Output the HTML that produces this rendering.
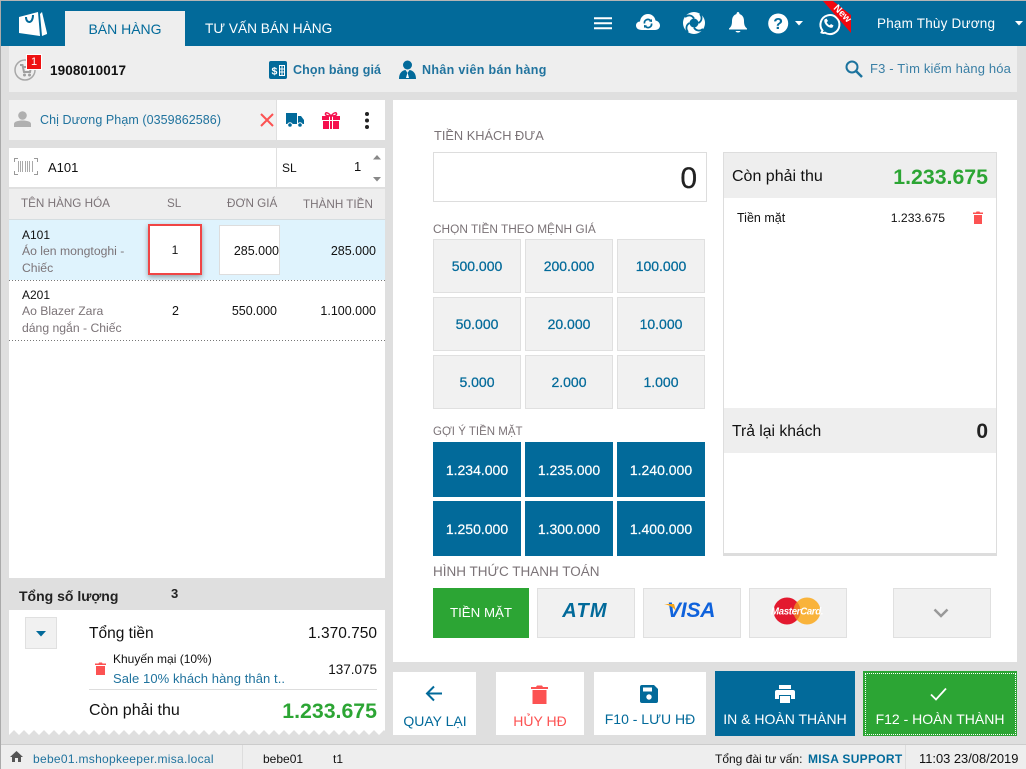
<!DOCTYPE html>
<html><head><meta charset="utf-8"><style>
html,body{margin:0;padding:0;width:1026px;height:769px;overflow:hidden;background:#dfdfdf;font-family:"Liberation Sans","DejaVu Sans",sans-serif;color:#111}
.a{position:absolute;white-space:nowrap}
.t{position:absolute;white-space:nowrap;font-size:13px;line-height:16px}
.r{text-align:right}.c{text-align:center}
.blue{color:#026a9a}
.lab{color:#7b7377;font-size:11.7px}
.d{position:absolute;width:86px;height:52px;background:#f1f1f1;border:1px solid #e0e0e0;color:#026a9a;font-size:14px;line-height:52px;text-align:center;-webkit-text-stroke:.25px #026a9a}
.g{position:absolute;width:88px;height:55px;background:#026a9a;color:#fff;font-size:14px;line-height:57px;text-align:center;-webkit-text-stroke:.2px #fff}
.p{position:absolute;top:588px;height:48px;background:#f1f1f1;border:1px solid #e0e0e0}
.b{position:absolute;background:#fff;text-align:center;font-size:14px;color:#026a9a}
.dot{position:absolute;left:9px;width:376px;height:1px;background:repeating-linear-gradient(90deg,#777 0 1px,transparent 1px 3px)}
svg{position:absolute;overflow:visible}
</style></head><body>
<div class="a" style="left:0;top:0;width:1026px;height:1px;background:#b5b5b5"></div>
<div class="a" style="left:1px;top:1px;width:1025px;height:45px;background:#026a9a"></div>
<div class="a" style="left:0;top:1px;width:1px;height:768px;background:#aaa"></div>
<!-- logo -->
<svg style="left:18px;top:11px" width="30" height="26" viewBox="0 0 30 26"><path d="M1 6 L20 1 L22 25 L1 22 Z" fill="#fff"/><path d="M24 1 L29 22 L29 23 L24 25 L22 3 Z" fill="#fff"/><path d="M8 6 C8 13 15 13 15 4" fill="none" stroke="#026a9a" stroke-width="2"/></svg>
<div class="a c" style="left:65px;top:11px;width:120px;height:35px;background:#eee;color:#026a9a;font-size:14px;line-height:36px">BÁN HÀNG</div>
<div class="t" style="left:205px;top:21px;color:#fff;font-size:13.700px">TƯ VẤN BÁN HÀNG</div>
<!-- top icons -->
<svg style="left:594px;top:17px" width="18" height="13"><path d="M0 1.200H18M0 6.200H18M0 11.200H18" stroke="#fff" stroke-width="2"/></svg>
<svg style="left:636px;top:13px" width="24" height="18" viewBox="0 0 24 18"><path d="M6 17C2 17 0 15 0 12.500C0 10 2 8.500 4 8.500C4.500 4 8 1 12 1C16 1 19 4 19.500 7.500C22 8 24 10 24 12.500C24 15 22 17 19 17Z" fill="#fff"/><path d="M8.500 10.500A3.500 3.500 0 0 1 14.500 7.500M15.500 10.500A3.500 3.500 0 0 1 9.500 13.500" fill="none" stroke="#026a9a" stroke-width="1.700"/><path d="M13 8.500L16 9V6ZM11 12.500L8 12V15Z" fill="#026a9a"/></svg>
<svg style="left:683px;top:12px" width="22" height="22" viewBox="0 0 22 22"><circle cx="11" cy="11" r="11" fill="#fff"/><circle cx="11" cy="11" r="4.500" fill="#026a9a"/><path d="M11 6.500C9 3 5 2.500 2 5M15.500 11C19 9 19.500 5 17 2M11 15.500C13 19 17 19.500 20 17M6.500 11C3 13 2.500 17 5 20" fill="none" stroke="#026a9a" stroke-width="1.800"/></svg>
<svg style="left:729px;top:12px" width="18" height="21" viewBox="0 0 18 21"><path d="M9 0C10 0 10.500 1 10.500 2C13.500 3 15 5.500 15 9C15 13 16 15 18 16.500V17.500H0V16.500C2 15 3 13 3 9C3 5.500 4.500 3 7.500 2C7.500 1 8 0 9 0Z" fill="#fff"/><path d="M6.500 19H11.500C11 21 7 21 6.500 19Z" fill="#fff"/></svg>
<svg style="left:768px;top:13px" width="21" height="21" viewBox="0 0 21 21"><circle cx="10.200" cy="10.500" r="10" fill="#fff"/><text x="10.200" y="16" font-family="Liberation Sans" font-size="16" font-weight="700" text-anchor="middle" fill="#026a9a">?</text></svg>
<svg style="left:795px;top:21px" width="8" height="5"><path d="M0 0H8L4 4.500Z" fill="#fff"/></svg>
<svg style="left:817px;top:13px" width="22" height="22" viewBox="0 0 22 22"><path d="M4.500 19.500L5.500 17.500A9.500 9.500 0 1 1 8 19.700C7 20 5.500 20 4.500 19.500Z" fill="none" stroke="#fff" stroke-width="2"/><path d="M7.500 6.500L9.500 5.500L11 8L9.700 9.200C10.300 10.700 11.300 11.700 12.800 12.300L14 11L16.500 12.500L15.500 14.500C12 16 6 10.500 7.500 6.500Z" fill="#fff"/></svg>
<svg style="left:823px;top:1px" width="29" height="33"><path d="M0 0H10L28 14V32Z" fill="#f3060f"/><text x="0" y="0" transform="translate(10 7.500) rotate(45)" font-family="Liberation Sans" font-size="10" font-weight="700" fill="#fff">New</text></svg>
<div class="t" style="left:877px;top:16px;color:#fff;font-size:13.500px;letter-spacing:.2px">Phạm Thùy Dương</div>
<svg style="left:1015px;top:21px" width="8" height="5"><path d="M0 0H8L4 4.500Z" fill="#fff"/></svg>

<!-- toolbar -->
<div class="a" style="left:9px;top:46px;width:1008px;height:46px;background:#eee"></div>
<svg style="left:14px;top:59px" width="22" height="22" viewBox="0 0 22 22"><circle cx="11" cy="11" r="10" fill="none" stroke="#a8a8a8" stroke-width="1.500"/><path d="M6 6H8.500L10 13H16L17 8H9" fill="none" stroke="#a0a0a0" stroke-width="2"/><circle cx="10.500" cy="16" r="1.500" fill="#a0a0a0"/><circle cx="15.500" cy="16" r="1.500" fill="#a0a0a0"/></svg>
<div class="a c" style="left:26px;top:54px;width:14px;height:14px;background:#ee1111;border:1px solid #fff;color:#fff;font-size:11px;line-height:14px">1</div>
<div class="t" style="left:50px;top:63px;font-size:13.500px;font-weight:700;letter-spacing:.1px">1908010017</div>
<svg style="left:269px;top:61px" width="18" height="18" viewBox="0 0 18 18"><rect width="18" height="18" rx="2" fill="#026a9a"/><path d="M10.500 4.500H15.500V14.500H10.500ZM13 4.500V14.500M10.500 8H15.500M10.500 11H15.500" stroke="#fff" stroke-width="1" fill="none"/><text x="2.500" y="13.500" font-family="Liberation Sans" font-size="10.500" font-weight="700" fill="#fff">$</text></svg>
<div class="t blue" style="left:293px;top:62px;font-weight:700;font-size:12.500px;letter-spacing:.1px;color:#20739e">Chọn bảng giá</div>
<svg style="left:399px;top:60px" width="17" height="19" viewBox="0 0 17 19"><circle cx="8.500" cy="5" r="4.500" fill="#026a9a"/><path d="M0 19C0 13 3 10.500 6.500 10L8.500 13L10.500 10C14 10.500 17 13 17 19Z" fill="#026a9a"/><path d="M8.500 12.500L10 18H7Z" fill="#fff"/></svg>
<div class="t blue" style="left:422px;top:62px;font-weight:700;font-size:12.500px;letter-spacing:.33px;color:#20739e">Nhân viên bán hàng</div>
<svg style="left:845px;top:60px" width="18" height="18" viewBox="0 0 18 18"><circle cx="7" cy="7" r="5.500" fill="none" stroke="#1c739e" stroke-width="2"/><path d="M11 11L17 17" stroke="#1c739e" stroke-width="2.500"/></svg>
<div class="t" style="left:870px;top:61px;color:#3a7fa5;font-size:13px;letter-spacing:.15px">F3 - Tìm kiếm hàng hóa</div>

<!-- customer -->
<div class="a" style="left:9px;top:100px;width:267px;height:40px;background:#f1f1f1"></div>
<div class="a" style="left:277px;top:100px;width:108px;height:40px;background:#fff"></div>
<svg style="left:14px;top:111px" width="17" height="16" viewBox="0 0 17 16"><circle cx="8.500" cy="4.500" r="4.300" fill="#b0b0b0"/><path d="M0 16V13C0 10.500 4 9.500 8.500 9.500C13 9.500 17 10.500 17 13V16Z" fill="#b0b0b0"/></svg>
<div class="t blue" style="left:40px;top:112px;font-size:12.500px;letter-spacing:.07px;color:#20739e">Chị Dương Phạm (0359862586)</div>
<svg style="left:260px;top:113px" width="14" height="14"><path d="M1 1L13 13M13 1L1 13" stroke="#fc5252" stroke-width="2"/></svg>
<svg style="left:286px;top:113px" width="18" height="15" viewBox="0 0 18 15"><path d="M0 0H11V11H0ZM12 3H15L18 7V11H12Z" fill="#026a9a"/><circle cx="4" cy="12" r="2.300" fill="#026a9a" stroke="#fff"/><circle cx="14" cy="12" r="2.300" fill="#026a9a" stroke="#fff"/></svg>
<svg style="left:322px;top:112px" width="18" height="17" viewBox="0 0 18 17"><path d="M0 4H18V8H0ZM1 9H17V17H1Z" fill="#f5104e"/><path d="M7.500 4V17M10.500 4V17" stroke="#fff" stroke-width="1"/><path d="M9 4C6 0 3 0 3.500 2.500C4 4 7 4 9 4C11 4 14 4 14.500 2.500C15 0 12 0 9 4Z" fill="none" stroke="#f5104e" stroke-width="1.500"/></svg>
<svg style="left:365px;top:112px" width="4" height="17"><circle cx="2" cy="2" r="2" fill="#222"/><circle cx="2" cy="8.500" r="2" fill="#222"/><circle cx="2" cy="15" r="2" fill="#222"/></svg>

<!-- scan row -->
<div class="a" style="left:9px;top:148px;width:376px;height:39px;background:#fff"></div>
<div class="a" style="left:276px;top:148px;width:1px;height:39px;background:#e0e0e0"></div>
<svg style="left:14px;top:158px" width="24" height="17" viewBox="0 0 24 17"><path d="M4 .5H.5V4M.5 13V16.500H4M20 .5H23.500V4M23.500 13V16.500H20" fill="none" stroke="#999"/><path d="M4.500 3V14M6.500 3V14M8.500 3V14M11.500 3V14M13.500 3V14M15.500 3V14M18.500 3V14" stroke="#aaa" stroke-width="1"/></svg>
<div class="t" style="left:48px;top:160px;font-size:13px">A101</div>
<div class="t" style="left:282px;top:160px;font-size:12px">SL</div>
<div class="t" style="left:354px;top:159px;font-size:13px">1</div>
<svg style="left:373px;top:155px" width="8" height="27"><path d="M4 0L8 4.500H0ZM0 22H8L4 26.500Z" fill="#888"/></svg>

<!-- table -->
<div class="a" style="left:9px;top:188px;width:376px;height:31px;background:#eee;border-top:1px solid #e0e0e0;box-sizing:border-box"></div>
<div class="a" style="left:9px;top:219px;width:376px;height:1px;background:#d5dde0"></div>
<div class="t lab" style="left:21px;top:196px">TÊN HÀNG HÓA</div>
<div class="t lab" style="left:167px;top:196px">SL</div>
<div class="t lab" style="left:227px;top:196px">ĐƠN GIÁ</div>
<div class="t lab" style="left:303px;top:197px">THÀNH TIỀN</div>
<div class="a" style="left:9px;top:220px;width:376px;height:60px;background:#dff3fd"></div>
<div class="a" style="left:9px;top:280px;width:376px;height:298px;background:#fff"></div>
<div class="dot" style="top:280px"></div>
<div class="dot" style="top:340px"></div>
<div class="t" style="left:22px;top:227px;font-size:12px">A101</div>
<div class="t" style="left:22px;top:243px;font-size:12.200px;color:#7b7377">Áo len mongtoghi -</div>
<div class="t" style="left:22px;top:260px;font-size:12.200px;color:#7b7377">Chiếc</div>
<div class="a c" style="left:148px;top:224px;width:50px;height:47px;background:#fff;border:2px solid #f04545;box-shadow:0 2px 5px rgba(0,0,0,.35);font-size:12px;line-height:49px">1</div>
<div class="a" style="left:219px;top:225px;width:59px;height:48px;background:#fff;border:1px solid #ddd;font-size:12.500px;line-height:50px;text-align:right;overflow:hidden">285.000</div>
<div class="t r" style="left:300px;width:76px;top:243px;font-size:12.500px">285.000</div>
<div class="t" style="left:22px;top:287px;font-size:12px">A201</div>
<div class="t" style="left:22px;top:303px;font-size:12.200px;color:#7b7377">Ao Blazer Zara</div>
<div class="t" style="left:22px;top:320px;font-size:12.200px;color:#7b7377">dáng ngắn - Chiếc</div>
<div class="t" style="left:172px;top:303px;font-size:12.500px">2</div>
<div class="t r" style="left:207px;width:70px;top:303px;font-size:12.500px">550.000</div>
<div class="t r" style="left:296px;width:80px;top:303px;font-size:12.500px">1.100.000</div>

<!-- totals -->
<div class="t" style="left:19px;top:588px;font-weight:700;font-size:14px;color:#222">Tổng số lượng</div>
<div class="t" style="left:171px;top:586px;font-weight:700;font-size:13px;color:#222">3</div>
<svg style="left:9px;top:610px" width="376" height="125" viewBox="0 0 376 125"><defs><pattern id="z" width="10" height="5" patternUnits="userSpaceOnUse" y="120"><path d="M0 5L5 0L10 5Z" fill="#dfdfdf"/><path d="M0 0H5L0 5ZM5 0H10V5Z" fill="#fff"/></pattern></defs><rect width="376" height="120" fill="#fff"/><rect y="120" width="376" height="5" fill="url(#z)"/></svg>
<div class="a" style="left:25px;top:617px;width:30px;height:30px;background:#f1f1f1;border:1px solid #e0e0e0"></div>
<svg style="left:36px;top:631px" width="10" height="6"><path d="M0 0H10L5 5.500Z" fill="#026a9a"/></svg>
<div class="t" style="left:89px;top:626px;font-size:15.500px">Tổng tiền</div>
<div class="t r" style="left:277px;width:100px;top:626px;font-size:15.500px">1.370.750</div>
<svg style="left:95px;top:662px" width="11" height="13" viewBox="0 0 11 13"><path d="M0 1.500H3.500L4 .5H7L7.500 1.500H11V3H0ZM1 4H10V13H1Z" fill="#fc5252"/></svg>
<div class="t" style="left:113px;top:651px;font-size:12px">Khuyến mại (10%)</div>
<div class="t" style="left:113px;top:671px;font-size:13px;color:#20739e;letter-spacing:.08px">Sale 10% khách hàng thân t..</div>
<div class="t r" style="left:297px;width:80px;top:662px;font-size:13.500px">137.075</div>
<div class="a" style="left:89px;top:689px;width:288px;height:1px;background:#ddd"></div>
<div class="t" style="left:89px;top:703px;font-size:16px">Còn phải thu</div>
<div class="t r" style="left:257px;width:120px;top:700px;font-size:21.300px;line-height:22px;font-weight:700;color:#2ca534">1.233.675</div>

<!-- right panel -->
<div class="a" style="left:393px;top:100px;width:624px;height:562px;background:#fff"></div>
<div class="t lab" style="left:434px;top:128px;font-size:12.800px">TIỀN KHÁCH ĐƯA</div>
<div class="a r" style="left:433px;top:152px;width:263px;height:48px;background:#fff;border:1px solid #ddd;padding-right:9px;font-size:30px;line-height:52px;color:#222;-webkit-text-stroke:.3px #222">0</div>
<div class="t lab" style="left:433px;top:221px;font-size:11.850px">CHỌN TIỀN THEO MỆNH GIÁ</div>
<div class="d" style="left:433px;top:239px">500.000</div><div class="d" style="left:525px;top:239px">200.000</div><div class="d" style="left:617px;top:239px">100.000</div>
<div class="d" style="left:433px;top:297px">50.000</div><div class="d" style="left:525px;top:297px">20.000</div><div class="d" style="left:617px;top:297px">10.000</div>
<div class="d" style="left:433px;top:355px">5.000</div><div class="d" style="left:525px;top:355px">2.000</div><div class="d" style="left:617px;top:355px">1.000</div>
<div class="t lab" style="left:433px;top:424px;font-size:11.500px">GỢI Ý TIỀN MẶT</div>
<div class="g" style="left:433px;top:442px">1.234.000</div><div class="g" style="left:525px;top:442px">1.235.000</div><div class="g" style="left:617px;top:442px">1.240.000</div>
<div class="g" style="left:433px;top:501px">1.250.000</div><div class="g" style="left:525px;top:501px">1.300.000</div><div class="g" style="left:617px;top:501px">1.400.000</div>
<!-- right box -->
<div class="a" style="left:723px;top:152px;width:272px;height:400px;border:1px solid #ddd;border-bottom:3px solid #ddd;background:#fff"></div>
<div class="a" style="left:724px;top:153px;width:272px;height:45px;background:#eee"></div>
<div class="t" style="left:732px;top:169px;font-size:16px">Còn phải thu</div>
<div class="t r" style="left:868px;width:120px;top:166px;font-size:21.300px;line-height:22px;font-weight:700;color:#2ca534">1.233.675</div>
<div class="t" style="left:737px;top:210px;font-size:12.500px">Tiền mặt</div>
<div class="t r" style="left:865px;width:80px;top:210px;font-size:12.200px">1.233.675</div>
<svg style="left:973px;top:211px" width="10" height="13" viewBox="0 0 10 13"><path d="M0 1.500H3L3.500 .5H6.500L7 1.500H10V3H0ZM1 4H9V13H1Z" fill="#fc5252"/></svg>
<div class="a" style="left:724px;top:408px;width:272px;height:45px;background:#eee"></div>
<div class="t" style="left:732px;top:424px;font-size:15.700px">Trả lại khách</div>
<div class="t r" style="left:938px;width:50px;top:421px;font-size:21px;line-height:22px;font-weight:700;color:#222">0</div>
<!-- payment -->
<div class="t lab" style="left:433px;top:564px;font-size:13.500px">HÌNH THỨC THANH TOÁN</div>
<div class="a c" style="left:433px;top:588px;width:96px;height:50px;background:#2ca534;color:#fff;font-size:13.300px;line-height:50px">TIỀN MẶT</div>
<div class="p" style="left:537px;width:96px"></div>
<div class="a c" style="left:536px;top:600px;width:98px;font-size:20px;line-height:22px;font-style:italic;font-weight:700;color:#026a9a;letter-spacing:1.200px">ATM</div>
<div class="p" style="left:643px;width:96px"></div>
<div class="a" style="left:667px;top:600px;width:52px;font-size:21px;line-height:22px;font-style:italic;font-weight:700;color:#0f62dc;letter-spacing:-.2px">VISA</div>
<svg style="left:664px;top:604px" width="12" height="7"><path d="M0 0H10L12 7C9 3 5 1 0 0Z" fill="#f4a51c"/></svg>
<div class="p" style="left:749px;width:96px"></div>
<svg style="left:773px;top:597px" width="48" height="28" viewBox="0 0 48 28"><circle cx="14" cy="14" r="13.500" fill="#e3192f"/><circle cx="34" cy="14" r="13.500" fill="#f9b33b"/><path d="M24 5A13.500 13.500 0 0 1 24 23A13.500 13.500 0 0 1 24 5Z" fill="#ee7a24"/><text x="24" y="17.500" text-anchor="middle" font-family="Liberation Sans" font-size="9.800" font-weight="700" font-style="italic" fill="#fff" letter-spacing="-.4">MasterCard.</text></svg>
<div class="p" style="left:893px;width:96px"></div>
<svg style="left:933px;top:608px" width="16" height="10"><path d="M1.500 1.500L8 8L14.500 1.500" fill="none" stroke="#999" stroke-width="2.500"/></svg>

<!-- buttons -->
<div class="b" style="left:393px;top:672px;width:83px;height:63px"></div>
<svg style="left:425px;top:685px" width="18" height="17"><path d="M9 1.500L2 8.500L9 15.500M2 8.500H17" fill="none" stroke="#026a9a" stroke-width="2"/></svg>
<div class="t c" style="left:390px;top:713px;width:90px;font-size:14px;color:#026a9a">QUAY LẠI</div>
<div class="b" style="left:496px;top:672px;width:88px;height:63px"></div>
<svg style="left:531px;top:685px" width="17" height="19" viewBox="0 0 17 19"><path d="M0 2H5L6 .5H11L12 2H17V4H0ZM1.500 5H15.500V19H1.500Z" fill="#fc5252"/></svg>
<div class="t c" style="left:496px;top:713px;width:88px;font-size:14px;color:#fc5252">HỦY HĐ</div>
<div class="b" style="left:594px;top:672px;width:112px;height:63px"></div>
<svg style="left:640px;top:685px" width="18" height="18" viewBox="0 0 18 18"><path d="M2 0H14L18 4V16A2 2 0 0 1 16 18H2A2 2 0 0 1 0 16V2A2 2 0 0 1 2 0Z" fill="#026a9a"/><rect x="3" y="2.500" width="9" height="4" fill="#fff"/><circle cx="9" cy="12" r="2.700" fill="#fff"/></svg>
<div class="t c" style="left:594px;top:711px;width:112px;font-size:14px;color:#026a9a">F10 - LƯU HĐ</div>
<div class="b" style="left:715px;top:671px;width:140px;height:65px;background:#026a9a"></div>
<svg style="left:775px;top:685px" width="20" height="18" viewBox="0 0 20 18"><path d="M4 0H16V4H4ZM2 5H18A2 2 0 0 1 20 7V14H16V10H4V14H0V7A2 2 0 0 1 2 5ZM5 11H15V18H5Z" fill="#fff"/></svg>
<div class="t c" style="left:715px;top:711px;width:140px;font-size:14px;color:#fff">IN &amp; HOÀN THÀNH</div>
<div class="b" style="left:863px;top:671px;width:154px;height:65px;background:#2ca534"></div>
<div class="a" style="left:865px;top:673px;width:149px;height:60px;border:1px dotted #fff"></div>
<svg style="left:930px;top:687px" width="17" height="14"><path d="M1 7.500L6 12.500L16 1.500" fill="none" stroke="#fff" stroke-width="1.800"/></svg>
<div class="t c" style="left:863px;top:711px;width:154px;font-size:14px;color:#fff">F12 - HOÀN THÀNH</div>

<!-- status -->
<div class="a" style="left:1px;top:744px;width:1025px;height:25px;background:#eee;border-top:1px solid #ccc;box-sizing:border-box"></div>
<div class="a" style="left:242px;top:745px;width:1px;height:24px;background:#ddd"></div>
<div class="a" style="left:905px;top:745px;width:1px;height:24px;background:#ddd"></div>
<svg style="left:10px;top:751px" width="13" height="11"><path d="M6.500 0L13 6H11V11H8V7H5V11H2V6H0Z" fill="#555"/></svg>
<div class="t" style="left:33px;top:751px;font-size:12px;color:#20739e;letter-spacing:.3px">bebe01.mshopkeeper.misa.local</div>
<div class="t" style="left:263px;top:751px;font-size:12px">bebe01</div>
<div class="t" style="left:333px;top:751px;font-size:12px">t1</div>
<div class="t" style="left:715px;top:751px;font-size:12px">Tổng đài tư vấn:</div>
<div class="t" style="left:808px;top:751px;font-size:12px;font-weight:700;color:#026a9a;letter-spacing:.3px">MISA SUPPORT</div>
<div class="t" style="left:919px;top:751px;font-size:12.900px">11:03 23/08/2019</div>
</body></html>
